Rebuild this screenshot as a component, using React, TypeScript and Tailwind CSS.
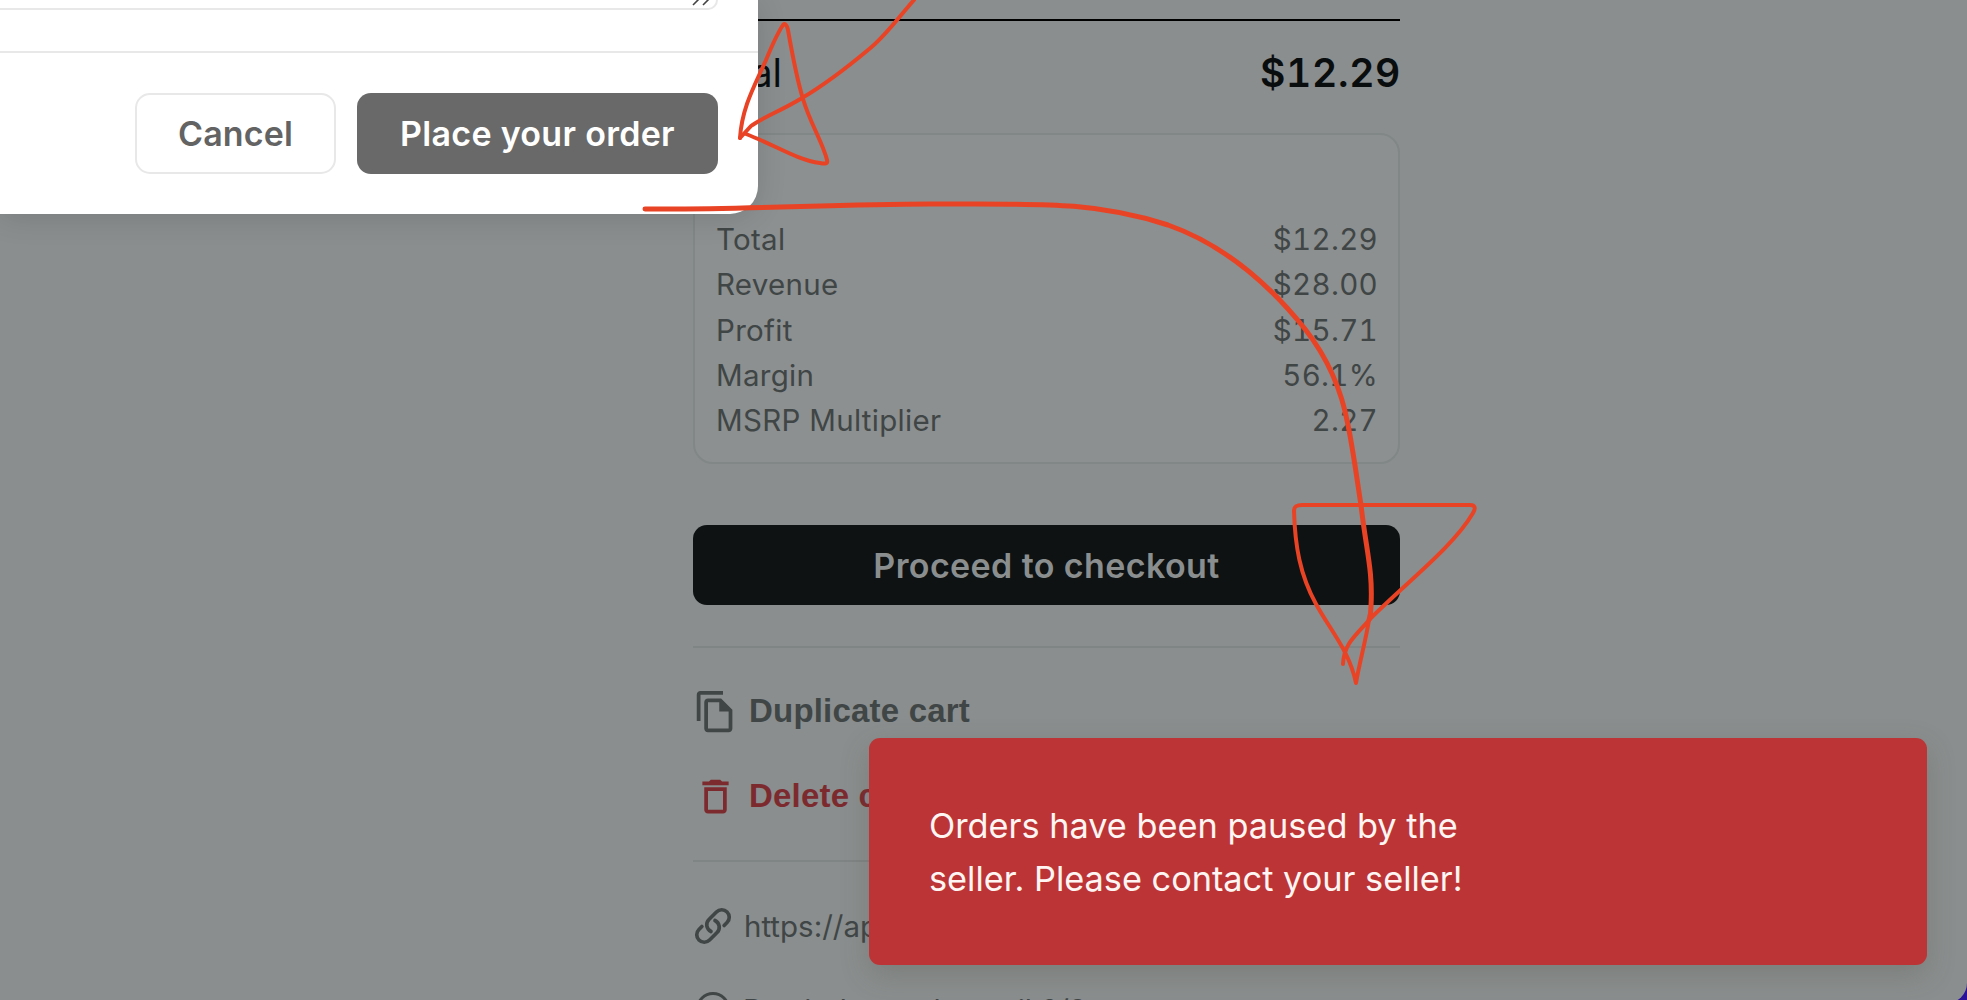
import type { ReactNode } from "react";

const stats = [
  { label: "Total", value: "$12.29" },
  { label: "Revenue", value: "$28.00" },
  { label: "Profit", value: "$15.71" },
  { label: "Margin", value: "56.1%" },
  { label: "MSRP Multiplier", value: "2.27" },
];

const Icon = ({ children }: { children: ReactNode }) => (
  <svg viewBox="0 0 24 24" className="size-[45px] shrink-0" fill="currentColor">
    {children}
  </svg>
);

const CartSummary = () => (
  <main className="ml-[693px] flex w-[707px] flex-col pt-[19px] text-[#404546]">
    <div className="flex h-[114px] items-start justify-between border-t-2 border-black pt-[24px] text-[39px] leading-[56px] text-[#090d0e]">
      <span className="-tracking-[0.2px]">Total</span>
      <span className="-mr-px font-semibold tracking-[0.7px] tabular-nums">
        $12.29
      </span>
    </div>
    <div className="h-[331px] rounded-[20px] border-2 border-[#818686] bg-[#8c9090] pt-[82px] pr-[20px] pl-[21px]">
      {stats.map((stat) => (
        <div
          key={stat.label}
          className="flex justify-between text-[29.5px] leading-[45.3px]"
        >
          <span className="tracking-[0.3px]">{stat.label}</span>
          <span className="tracking-[0.3px] tabular-nums">{stat.value}</span>
        </div>
      ))}
    </div>
    <button className="mt-[61px] h-[80px] rounded-[14px] bg-[#0e1213] text-[34px] font-semibold tracking-[0.4px] text-[#8a8e8e]">
      Proceed to checkout
    </button>
    <div className="mt-[41px] h-[2px] bg-[#7f8484]" />
    <div className="mt-[41px] flex h-[45px] items-center gap-[11px] font-['Liberation_Sans',sans-serif] text-[33px] font-bold tracking-[0.2px]">
      <Icon>
        <path d="M16 1H4c-1.1 0-2 .9-2 2v14h2V3h12V1zm-1 4H8c-1.1 0-1.99.9-1.99 2L6 21c0 1.1.89 2 1.99 2H19c1.1 0 2-.9 2-2V11l-6-6zM8 21V7h6v5h5v9H8z" />
      </Icon>
      <span className="pb-px">Duplicate cart</span>
    </div>
    <div className="mt-[40px] flex h-[45px] items-center gap-[11px] font-['Liberation_Sans',sans-serif] text-[33px] font-bold tracking-[0.2px] text-[#7d2a2f]">
      <Icon>
        <path d="M6 19c0 1.1.9 2 2 2h8c1.1 0 2-.9 2-2V7H6v12zM8 9h8v10H8V9zm7.5-5l-1-1h-5l-1 1H5v2h14V4h-3.5z" />
      </Icon>
      <span className="pb-px">Delete cart</span>
    </div>
    <div className="mt-[41px] h-[2px] bg-[#7f8484]" />
    <div className="mt-[44px] flex h-[40px] items-center gap-[11px] text-[29.5px]">
      <svg
        viewBox="0 0 24 24"
        className="size-[40px] shrink-0"
        fill="none"
        stroke="currentColor"
        strokeWidth="2.2"
        strokeLinecap="round"
        strokeLinejoin="round"
      >
        <path d="M13.19 8.688a4.5 4.5 0 0 1 1.242 7.244l-4.5 4.5a4.5 4.5 0 0 1-6.364-6.364l1.757-1.757m13.35-.622 1.757-1.757a4.5 4.5 0 0 0-6.364-6.364l-4.5 4.5a4.5 4.5 0 0 0 1.242 7.244" />
      </svg>
      <span>https://app</span>
    </div>
    <div className="mt-[44px] flex h-[40px] items-center gap-[10px] text-[29.5px]">
      <svg
        viewBox="0 0 40 40"
        className="size-[40px] shrink-0"
        fill="none"
        stroke="currentColor"
        strokeWidth="3"
      >
        <circle cx="20" cy="19" r="15.5" />
      </svg>
      <span className="-tracking-[0.1px]">Reminders to by mail 6/9</span>
    </div>
  </main>
);

const OrderDialog = () => (
  <div className="absolute top-0 left-0 flex h-[214px] w-[758px] flex-col rounded-br-[28px] bg-white shadow-[0_4px_30px_rgba(0,0,0,0.12)]">
    <div className="flex h-[51px] justify-end pr-[40px]">
      <div className="relative h-[10px] w-full rounded-br-[14px] border-r-2 border-b-2 border-[#e8e8e8]">
        <svg
          viewBox="0 0 22 8"
          className="absolute right-[3px] bottom-[2px] h-[8px] w-[22px]"
          stroke="#444"
          strokeWidth="1.6"
        >
          <path d="M2 7L9 0M12 7L19 0" />
        </svg>
      </div>
    </div>
    <div className="flex justify-end gap-[21px] border-t-2 border-[#e8e8e8] pt-[40px] pr-[40px] text-[34px] font-semibold tracking-[0.3px]">
      <button className="h-[81px] w-[201px] rounded-[15px] border-2 border-[#e8e8e8] tracking-[0.1px] text-[#636363]">
        Cancel
      </button>
      <button className="h-[81px] w-[361px] rounded-[14px] bg-[#696969] text-white">
        Place your order
      </button>
    </div>
  </div>
);

const Toast = () => (
  <div className="absolute top-[738px] left-[869px] h-[227px] w-[1058px] rounded-[11px] bg-[#bc3435] px-[60px] pt-[61px] text-[34.3px] leading-[53px] text-[#fff5f2] shadow-[0_10px_28px_rgba(80,80,65,0.25)]">
    <p className="w-[560px]">
      Orders have been paused by the seller. Please contact your seller!
    </p>
  </div>
);

// Hand drawn arrows over the page
const Annotations = () => (
  <svg
    viewBox="0 0 1967 1000"
    className="pointer-events-none absolute inset-0 h-[1000px] w-[1967px]"
    fill="none"
    stroke="#e94325"
    strokeWidth="4"
    strokeLinecap="round"
    strokeLinejoin="round"
  >
    <path d="M914 0C898 18 884 38 868 50C850 65 826 84 802 98C781 111 763 117 751 126L740 138" />
    <path d="M740 138C742 107 755 85 766 60C773 43 779 31 783 25C785 23 787 25 788 30C791 47 796 76 803 99C810 123 823 143 827 160C828 164 825 164 820 163C797 160 775 145 746 134" />
    <path
      d="M645 209C750 210 830 204 930 204C1040 204 1094 201 1168 225C1219 243 1265 279 1305 329C1330 361 1342 392 1348 425C1354 455 1357 480 1361 505"
      strokeWidth="5"
    />
    <path
      d="M1361 505C1366 550 1373 570 1371 606C1371 612 1370 617 1369 620"
      strokeWidth="5"
    />
    <path d="M1369 620C1365 644 1360 660 1356 683C1349 650 1330 630 1316 604C1300 575 1295 546 1294 511C1294 506 1297 505 1302 505H1470C1475 505 1476 508 1473 513C1453 547 1407 582 1371 618C1354 637 1344 644 1343 664" />
  </svg>
);

const App = () => {
  return (
    <div className="h-[1000px] w-[1967px] overflow-hidden bg-[#2b1199]">
      <div className="relative h-[1003px] overflow-hidden rounded-br-[20px] bg-[#8a8e8e] font-[Inter,sans-serif]">
        <CartSummary />
        <OrderDialog />
        <Toast />
        <Annotations />
      </div>
    </div>
  );
};
export default App;
